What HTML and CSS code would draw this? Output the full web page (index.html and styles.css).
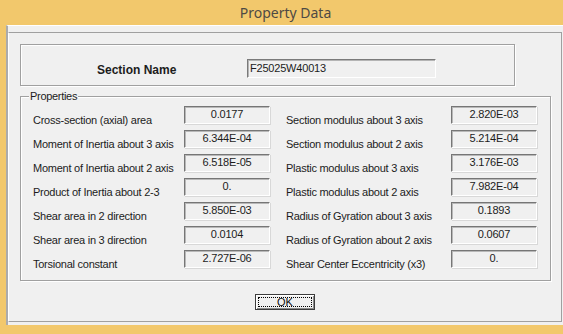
FILE: index.html
```html
<!DOCTYPE html>
<html lang="en">
<head>
    <meta charset="UTF-8" />
    <title>Property Data</title>
    <link rel="stylesheet" href="styles.css">
</head>
<body>
    <div class="titlebar">Property Data</div>
    <div class="frame">
        <div class="client">
            <div class="panel">
                <div class="section-box">
                    <span class="section-label">Section Name</span>
                    <div class="name-field">F25025W40013</div>
                </div>

                <div class="group">
                    <span class="group-title">Properties</span>
                    <div class="grid">
                        <div class="row"><span class="label">Cross-section (axial) area</span><span class="value">0.0177</span></div>
                        <div class="row right"><span class="label">Section modulus about 3 axis</span><span class="value">2.820E-03</span></div>

                        <div class="row"><span class="label">Moment of Inertia about 3 axis</span><span class="value">6.344E-04</span></div>
                        <div class="row right"><span class="label">Section modulus about 2 axis</span><span class="value">5.214E-04</span></div>

                        <div class="row"><span class="label">Moment of Inertia about 2 axis</span><span class="value">6.518E-05</span></div>
                        <div class="row right"><span class="label">Plastic modulus about 3 axis</span><span class="value">3.176E-03</span></div>

                        <div class="row"><span class="label">Product of Inertia about 2-3</span><span class="value">0.</span></div>
                        <div class="row right"><span class="label">Plastic modulus about 2 axis</span><span class="value">7.982E-04</span></div>

                        <div class="row"><span class="label">Shear area in 2 direction</span><span class="value">5.850E-03</span></div>
                        <div class="row right"><span class="label">Radius of Gyration about 3 axis</span><span class="value">0.1893</span></div>

                        <div class="row"><span class="label">Shear area in 3 direction</span><span class="value">0.0104</span></div>
                        <div class="row right"><span class="label">Radius of Gyration about 2 axis</span><span class="value">0.0607</span></div>

                        <div class="row"><span class="label">Torsional constant</span><span class="value">2.727E-06</span></div>
                        <div class="row right"><span class="label">Shear Center Eccentricity (x3)</span><span class="value">0.</span></div>
                    </div>
                </div>

                <div class="actions">
                    <button class="ok-button"><span class="focus">OK</span></button>
                </div>
            </div>
        </div>
    </div>
</body>
</html>
```

FILE: styles.css
```css
* {
    box-sizing: border-box;
}
body {
    margin: 0;
    width: 563px;
    height: 334px;
    overflow: hidden;
    background-color: #f2c86c;
    font-family: 'Liberation Sans', Arial, sans-serif;
    font-size: 11px;
    color: #1c1c1c;
}
.titlebar {
    height: 25px;
    display: flex;
    justify-content: center;
    align-items: center;
    padding-left: 8px;
    font-family: 'Noto Sans', sans-serif;
    font-size: 14px;
    color: #4e4a44;
}
.frame {
    padding-left: 6px;
}
.client {
    background-color: #f0f0f0;
    border-left: 2px solid #ababab;
    border-top: 1px solid #fff;
    padding-top: 6px;
    padding-bottom: 3px;
}
.panel {
    height: 290px;
    margin-right: 1px;
    border: 1px solid #a0a0a0;
    border-left-color: #fff;
}
.section-box {
    display: flex;
    align-items: flex-start;
    width: 495px;
    height: 42px;
    margin: 11px 0 0 11px;
    border: 1px solid #a0a0a0;
    box-shadow: 1px 1px 0 #fff, inset 1px 1px 0 #fff;
}
.section-label {
    width: 226px;
    padding-left: 76px;
    margin-top: 18px;
    line-height: 14px;
    font-size: 12px;
    font-weight: bold;
}
.name-field {
    width: 189px;
    height: 19px;
    margin-top: 14px;
    padding-left: 2px;
    line-height: 16px;
    letter-spacing: -0.2px;
    border: 1px solid;
    border-color: #7a7a7a #fff #fff #7a7a7a;
    box-shadow: inset 1px 1px 0 #b4b4b4;
}
.group {
    position: relative;
    width: 531px;
    height: 185px;
    margin: 10px 0 0 11px;
    padding: 9px 0 0 12px;
    border: 1px solid #a0a0a0;
    box-shadow: 1px 1px 0 #fff, inset 1px 1px 0 #fff;
}
.group-title {
    position: absolute;
    top: -7px;
    left: 8px;
    padding: 0 1px;
    line-height: 13px;
    letter-spacing: -0.3px;
    background-color: #f0f0f0;
}
.grid {
    display: grid;
    grid-template-columns: 237px 253px;
    column-gap: 16px;
    grid-auto-rows: 24px;
}
.row {
    display: flex;
    align-items: flex-start;
}
.label {
    width: 151px;
    padding-top: 8px;
    line-height: 13px;
    letter-spacing: -0.25px;
    white-space: nowrap;
}
.row.right .label {
    width: 165px;
}
.value {
    width: 86px;
    height: 18px;
    line-height: 15px;
    text-align: center;
    letter-spacing: -0.2px;
    border: 1px solid;
    border-color: #767676 #fff #fff #767676;
    box-shadow: inset 1px 1px 0 #b8b8b8, 1px 1px 0 #d8d8d8;
}
.actions {
    display: flex;
    justify-content: center;
    margin-top: 13px;
}
.ok-button {
    width: 60px;
    height: 16px;
    padding: 2px;
    background-color: #f0f0f0;
    border: 1px solid #3c3c3c;
    box-shadow: inset 1px 1px 0 #fff, inset -1px -1px 0 #8a8a8a;
    font-family: 'Liberation Sans', Arial, sans-serif;
    font-size: 11px;
    color: #111;
}
.focus {
    display: block;
    height: 10px;
    line-height: 8px;
    border: 1px dotted #000;
}
```
